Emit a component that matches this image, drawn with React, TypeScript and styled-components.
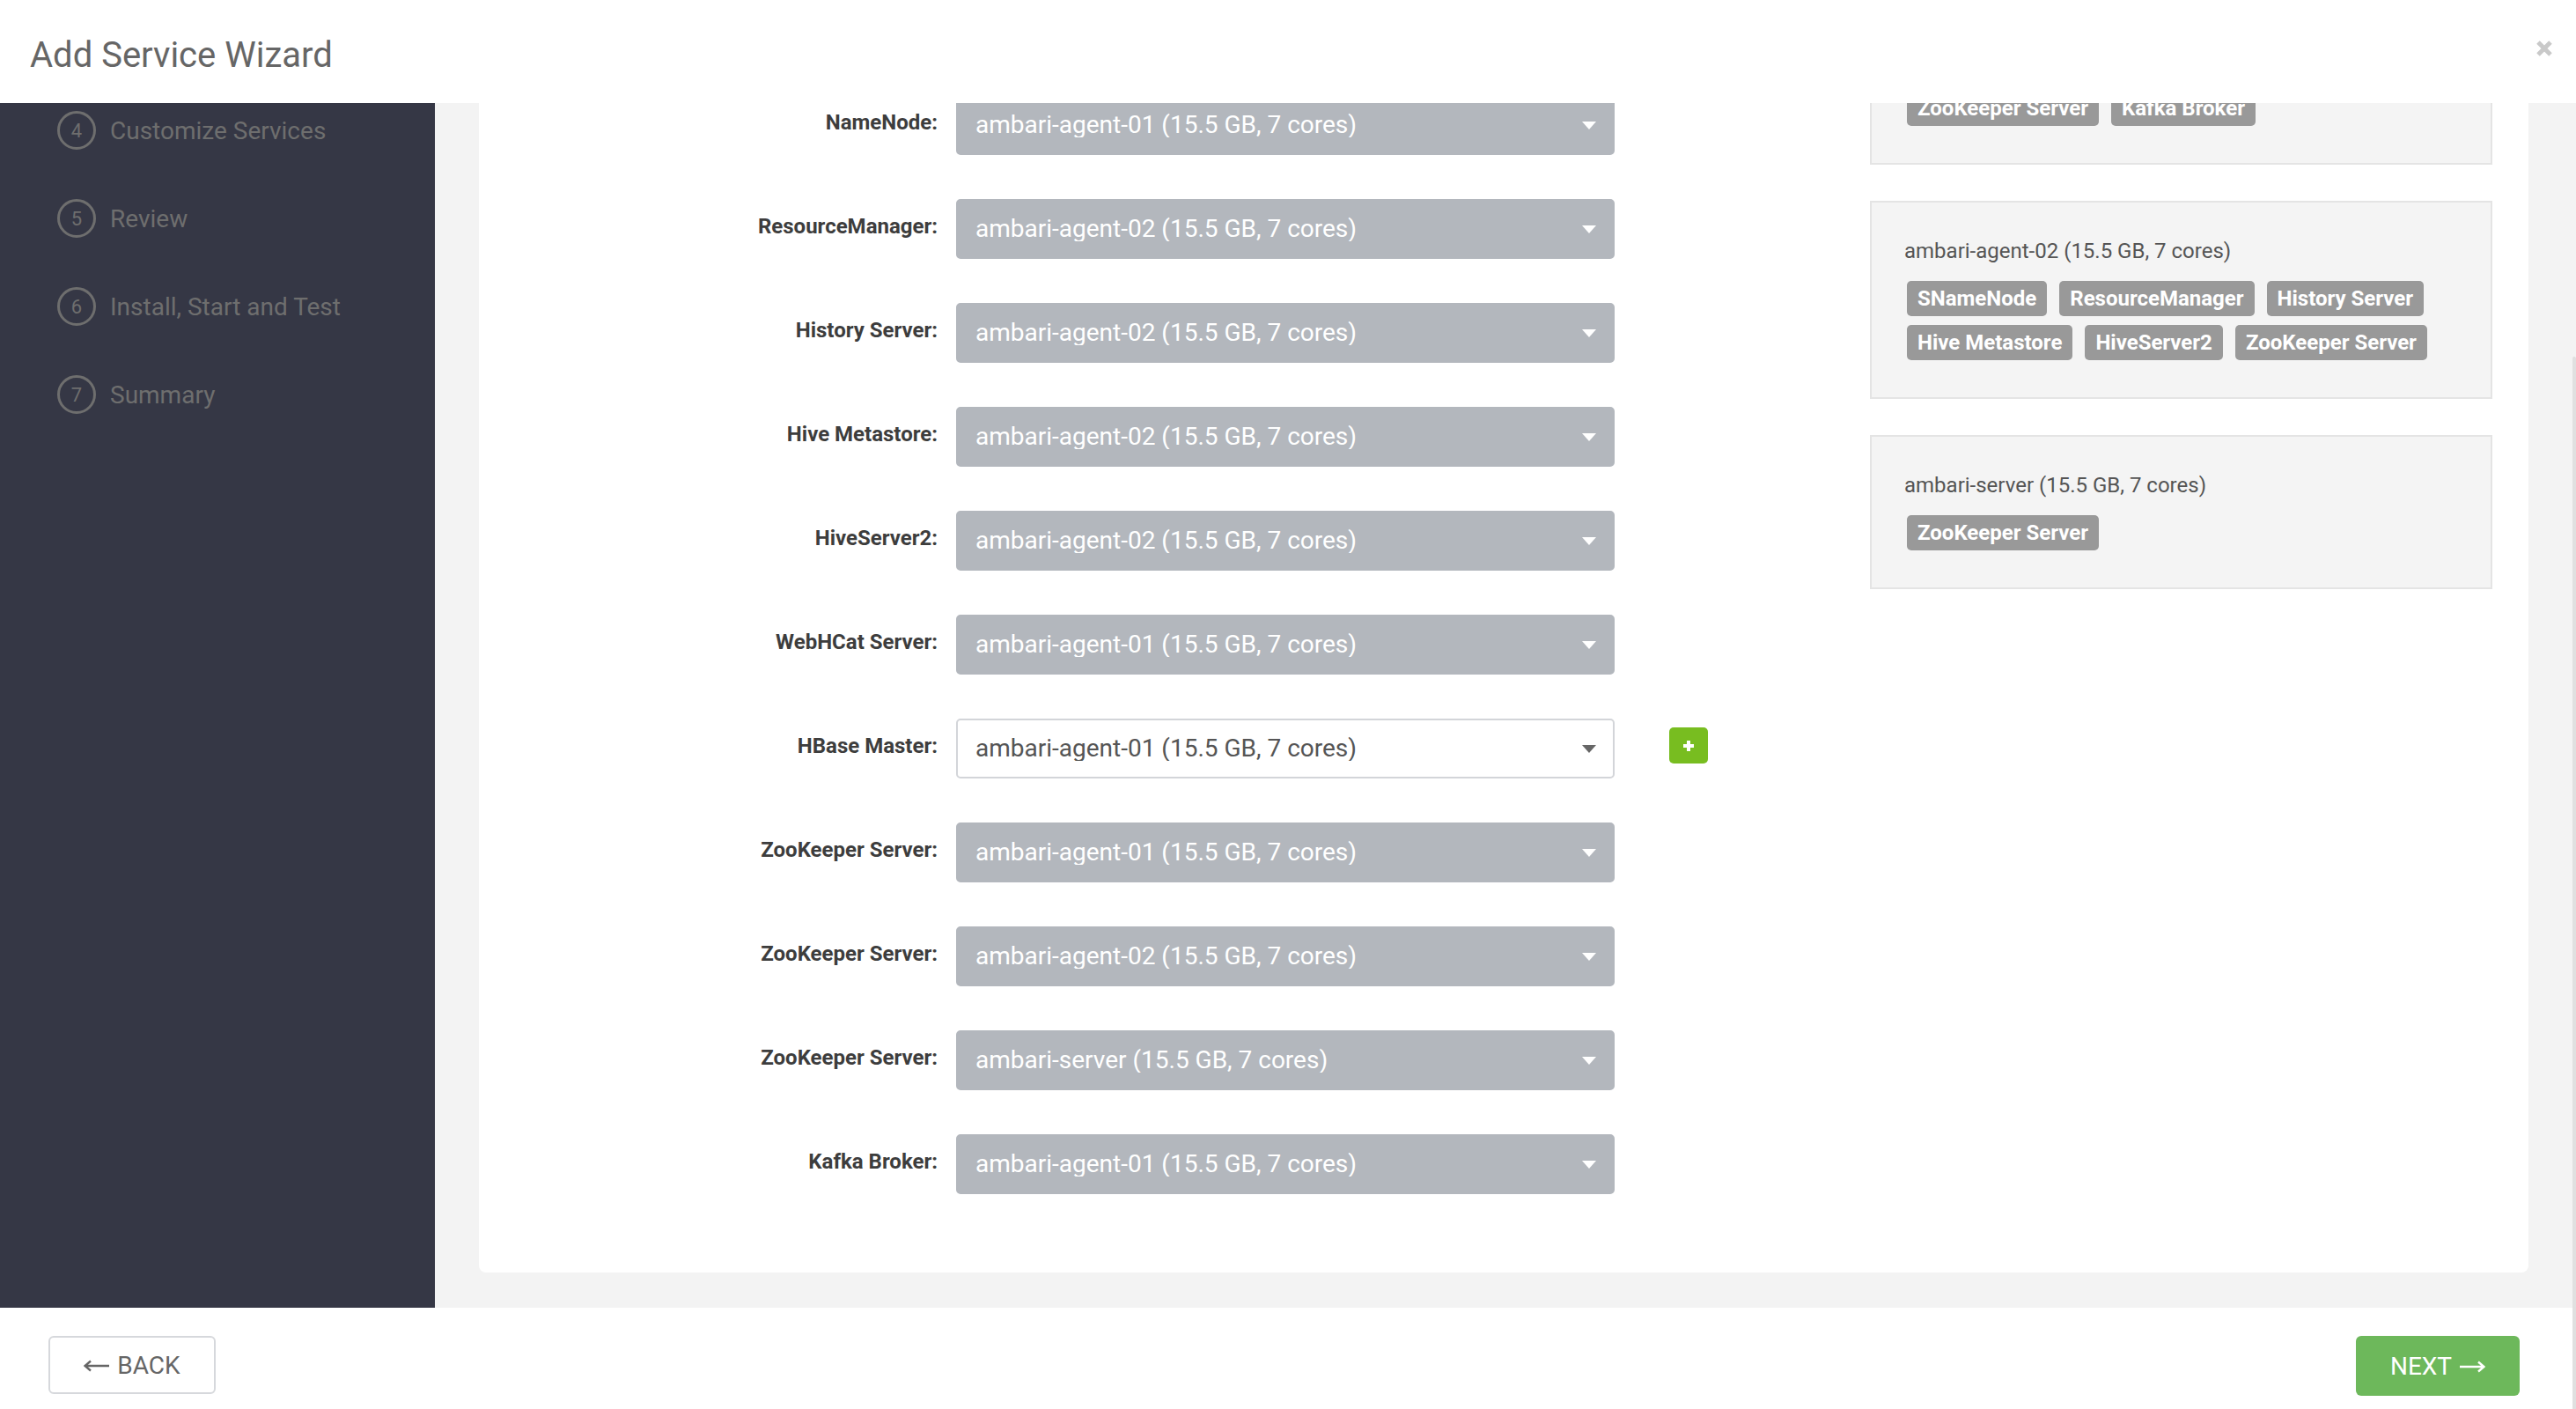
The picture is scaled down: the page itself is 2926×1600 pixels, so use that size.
import React, { useLayoutEffect, useRef } from 'react';
import styled, { createGlobalStyle } from 'styled-components';

const GlobalStyle = createGlobalStyle`
  html, body, #root { height: 100%; margin: 0; }
  body {
    font-family: Roboto, "Liberation Sans", sans-serif;
    background: #fff;
    overflow: hidden;
  }
  * { box-sizing: border-box; }
`;

const Modal = styled.div`
  display: flex;
  flex-direction: column;
  height: 100vh;
`;

const Header = styled.div`
  height: 117px;
  flex: none;
  display: flex;
  align-items: center;
  justify-content: space-between;
  padding: 8px 26px 0 34px;
  background: #fff;
`;

const Title = styled.h1`
  margin: 0;
  font-size: 40px;
  line-height: 48px;
  font-weight: 400;
  color: #666;
`;

const Close = styled.button`
  border: 0;
  background: none;
  padding: 0;
  margin-bottom: 15px;
  width: 20px;
  height: 20px;
  display: flex;
  cursor: pointer;
`;

const Body = styled.div`
  flex: 1;
  min-height: 0;
  overflow: hidden;
`;

const Content = styled.div`
  display: flex;
  align-items: stretch;
`;

const Sidebar = styled.ul`
  width: 494px;
  flex: none;
  margin: 0;
  padding: 54px 0 0;
  list-style: none;
  background: #353745;
`;

const Step = styled.li<{ $done?: boolean }>`
  height: 100px;
  display: flex;
  align-items: center;
  gap: 16px;
  padding-left: 65px;
  color: ${p => (p.$done ? '#9a9ca6' : '#6e6e6e')};
  font-size: 28px;
`;

const StepNum = styled.span`
  width: 44px;
  height: 44px;
  border: 3px solid currentColor;
  border-radius: 50%;
  display: flex;
  align-items: center;
  justify-content: center;
  font-size: 22px;
`;

const Main = styled.div`
  flex: 1;
  background: #f3f3f3;
  padding: 40px 54px 40px 50px;
`;

const Panel = styled.div`
  background: #fff;
  border-radius: 8px;
  padding: 40px 41px 89px 0;
`;

const Intro = styled.div`
  padding-left: 50px;
  h2 {
    margin: 0 0 20px;
    font-size: 36px;
    line-height: 44px;
    font-weight: 400;
    color: #333;
  }
  p {
    margin: 0 0 40px;
    font-size: 24px;
    line-height: 34px;
    color: #666;
    white-space: nowrap;
  }
`;

const Columns = styled.div`
  display: flex;
  align-items: flex-start;
  justify-content: space-between;
`;

const Assignments = styled.div`
  padding-top: 28px;
  display: flex;
  flex-direction: column;
  gap: 50px;
`;

const Row = styled.div`
  display: flex;
  align-items: center;
  height: 68px;
`;

const Label = styled.label`
  width: 521px;
  margin-right: 21px;
  padding-bottom: 6px;
  text-align: right;
  font-size: 24px;
  font-weight: 700;
  color: #3d3d3d;
`;

const Select = styled.div<{ $active?: boolean }>`
  width: 748px;
  height: 68px;
  display: flex;
  align-items: center;
  justify-content: space-between;
  padding: 0 19px 0 20px;
  border-radius: 5px;
  background: ${p => (p.$active ? '#fff' : '#b3b7bd')};
  border: 2px solid ${p => (p.$active ? '#d3d5d9' : '#b3b7bd')};
  color: ${p => (p.$active ? '#555' : '#fff')};
`;

const SelectValue = styled.span`
  display: block;
  font-size: 28px;
  line-height: 28px;
  height: 28px;
  overflow: hidden;
  white-space: nowrap;
`;

const Caret = styled.span<{ $active?: boolean }>`
  width: 0;
  height: 0;
  border-left: 8px solid transparent;
  border-right: 8px solid transparent;
  border-top: 9px solid ${p => (p.$active ? '#666' : '#fff')};
`;

const AddButton = styled.button`
  width: 44px;
  height: 41px;
  margin-left: 62px;
  margin-bottom: 7px;
  border: 0;
  border-radius: 5px;
  background: #78bd20;
  display: flex;
  align-items: center;
  justify-content: center;
  padding: 0;
  cursor: pointer;
`;

const Hosts = styled.div`
  width: 707px;
  display: flex;
  flex-direction: column;
  gap: 41px;
`;

const HostBox = styled.div`
  border: 2px solid #e4e4e4;
  background: #f4f4f4;
  padding: 38px 37px 42px;
`;

const HostName = styled.div`
  font-size: 24px;
  line-height: 34px;
  color: #555;
  margin-bottom: 17px;
`;

const Tags = styled.div`
  display: flex;
  flex-wrap: wrap;
  gap: 10px 14px;
  padding-left: 3px;
`;

const Tag = styled.span`
  background: #999;
  color: #fff;
  font-size: 24px;
  font-weight: 700;
  line-height: 28px;
  padding: 6px 12px;
  border-radius: 5px;
`;

const Footer = styled.div`
  height: 115px;
  flex: none;
  display: flex;
  justify-content: space-between;
  align-items: flex-start;
  padding: 32px 64px 0 55px;
  background: #fff;
`;

const FooterButton = styled.button<{ $primary?: boolean }>`
  height: ${p => (p.$primary ? '68px' : '66px')};
  width: ${p => (p.$primary ? '186px' : '190px')};
  display: flex;
  align-items: center;
  justify-content: center;
  gap: 8px;
  border: ${p => (p.$primary ? '0' : '2px solid #d6d8dc')};
  border-radius: 6px;
  background: ${p => (p.$primary ? '#6db85b' : '#fff')};
  color: ${p => (p.$primary ? '#fff' : '#666')};
  font-family: Roboto, "Liberation Sans", sans-serif;
  font-size: 28px;
  padding: 0;
  cursor: pointer;
  svg { flex: none; }
`;

const ScrollThumb = styled.div`
  position: fixed;
  right: 0;
  top: 405px;
  bottom: 0;
  width: 4px;
  background: #e0e0e0;
  border-radius: 2px 2px 0 0;
`;

const Arrow: React.FC<{ dir: 'left' | 'right' }> = ({ dir }) => (
  <svg width="30" height="14" viewBox="0 0 30 14" style={{ marginTop: 2 }}>
    {dir === 'left' ? (
      <path d="M29 7 H2 M8 1.5 L1.5 7 L8 12.5" stroke="currentColor" strokeWidth="2.4" fill="none" />
    ) : (
      <path d="M1 7 H28 M22 1.5 L28.5 7 L22 12.5" stroke="currentColor" strokeWidth="2.4" fill="none" />
    )}
  </svg>
);

const steps = [
  'Choose Services',
  'Assign Masters',
  'Assign Slaves and Clients',
  'Customize Services',
  'Review',
  'Install, Start and Test',
  'Summary',
];

const A1 = 'ambari-agent-01 (15.5 GB, 7 cores)';
const A2 = 'ambari-agent-02 (15.5 GB, 7 cores)';
const SRV = 'ambari-server (15.5 GB, 7 cores)';

const assignments: { label: string; host: string; active?: boolean }[] = [
  { label: 'SNameNode:', host: A2 },
  { label: 'NameNode:', host: A1 },
  { label: 'ResourceManager:', host: A2 },
  { label: 'History Server:', host: A2 },
  { label: 'Hive Metastore:', host: A2 },
  { label: 'HiveServer2:', host: A2 },
  { label: 'WebHCat Server:', host: A1 },
  { label: 'HBase Master:', host: A1, active: true },
  { label: 'ZooKeeper Server:', host: A1 },
  { label: 'ZooKeeper Server:', host: A2 },
  { label: 'ZooKeeper Server:', host: SRV },
  { label: 'Kafka Broker:', host: A1 },
];

const hosts = [
  { name: A1, components: ['NameNode', 'WebHCat Server', 'HBase Master', 'ZooKeeper Server', 'Kafka Broker'] },
  { name: A2, components: ['SNameNode', 'ResourceManager', 'History Server', 'Hive Metastore', 'HiveServer2', 'ZooKeeper Server'] },
  { name: SRV, components: ['ZooKeeper Server'] },
];

const App: React.FC = () => {
  const bodyRef = useRef<HTMLDivElement>(null);

  // the wizard body is scrolled all the way down
  useLayoutEffect(() => {
    if (bodyRef.current) bodyRef.current.scrollTop = bodyRef.current.scrollHeight;
  }, []);

  return (
    <Modal>
      <GlobalStyle />
      <Header>
        <Title>Add Service Wizard</Title>
        <Close aria-label="close">
          <svg width="20" height="20" viewBox="0 0 20 20">
            <path d="M3 3 L17 17 M17 3 L3 17" stroke="#c9c9c9" strokeWidth="5" />
          </svg>
        </Close>
      </Header>
      <Body ref={bodyRef}>
        <Content>
          <Sidebar>
            {steps.map((s, i) => (
              <Step key={s} $done={i < 3}>
                <StepNum>{i + 1}</StepNum>
                {s}
              </Step>
            ))}
          </Sidebar>
          <Main>
            <Panel>
              <Intro>
                <h2>Assign Masters</h2>
                <p>Assign master components to hosts you want to run them on.</p>
              </Intro>
              <Columns>
                <Assignments>
                  {assignments.map((a, i) => (
                    <Row key={i}>
                      <Label>{a.label}</Label>
                      <Select $active={a.active}>
                        <SelectValue>{a.host}</SelectValue>
                        <Caret $active={a.active} />
                      </Select>
                      {a.active && (
                        <AddButton aria-label="add">
                          <svg width="14" height="14" viewBox="0 0 14 14">
                            <path d="M7 1 V13 M1 7 H13" stroke="#fff" strokeWidth="4" />
                          </svg>
                        </AddButton>
                      )}
                    </Row>
                  ))}
                </Assignments>
                <Hosts>
                  {hosts.map(h => (
                    <HostBox key={h.name}>
                      <HostName>{h.name}</HostName>
                      <Tags>
                        {h.components.map((c, i) => (
                          <Tag key={i}>{c}</Tag>
                        ))}
                      </Tags>
                    </HostBox>
                  ))}
                </Hosts>
              </Columns>
            </Panel>
          </Main>
        </Content>
      </Body>
      <Footer>
        <FooterButton>
          <Arrow dir="left" />
          BACK
        </FooterButton>
        <FooterButton $primary>
          NEXT
          <Arrow dir="right" />
        </FooterButton>
      </Footer>
      <ScrollThumb />
    </Modal>
  );
};

export default App;
